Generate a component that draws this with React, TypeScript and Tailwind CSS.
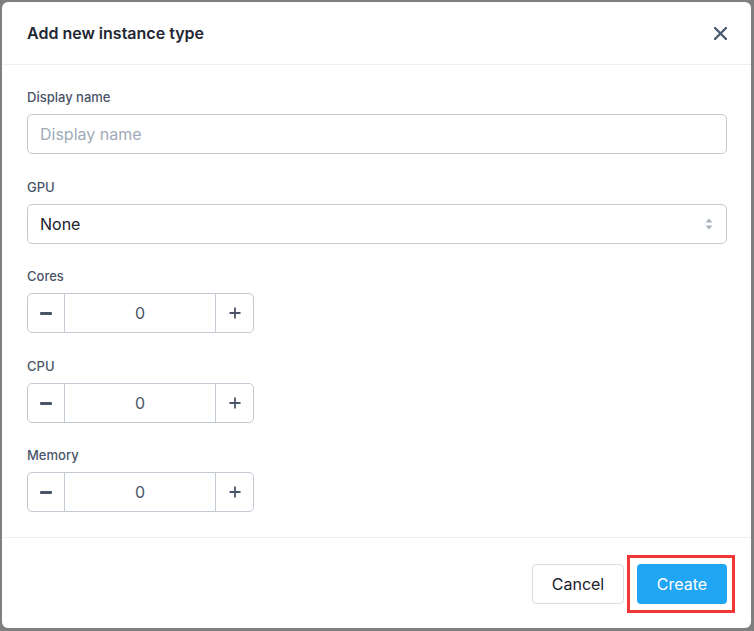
import React from "react";

const font = { fontFamily: "Inter, 'Noto Sans', sans-serif" };

function Label({ children }: { children: React.ReactNode }) {
  return (
    <div className="mb-[7px] text-[13px] leading-[20px] font-medium text-[#4a5568]">
      {children}
    </div>
  );
}

function Stepper() {
  return (
    <div className="flex h-[40px] w-[227px] rounded-[5px] border border-[#c3cad3]">
      <div className="flex w-[37px] items-center justify-center border-r border-[#c3cad3]">
        <div className="h-[3px] w-[12px] rounded-[1px] bg-[#4a5568]" />
      </div>
      <div className="flex flex-1 items-center justify-center text-[16px] text-[#4a5568]">0</div>
      <div className="flex w-[38px] items-center justify-center border-l border-[#c3cad3]">
        <svg width="12" height="12" viewBox="0 0 12 12">
          <path d="M6 0.5V11.5M0.5 6H11.5" stroke="#4a5568" strokeWidth="1.8" />
        </svg>
      </div>
    </div>
  );
}

export default function App() {
  return (
    <div className="h-[631px] w-[754px] bg-[#7f7f7f] pl-[2px] pt-[2px] pr-[3px] pb-[3px]" style={font}>
      <div className="flex h-full w-full flex-col rounded-[6px] bg-white">
        <div className="flex h-[63px] shrink-0 items-center justify-between border-b border-[#edf0f3] pl-[25px] pr-[24px]">
          <div className="text-[16px] font-semibold text-[#1f2733]">Add new instance type</div>
          <svg width="13" height="13" viewBox="0 0 13 13">
            <path d="M1 1L12 12M12 1L1 12" stroke="#4b5c70" strokeWidth="2.4" strokeLinecap="round" />
          </svg>
        </div>
        <div className="flex shrink-0 flex-col border-b border-[#edf0f3] pl-[25px] pr-[24px] pt-[22px] pb-[25px]">
          <Label>Display name</Label>
          <div className="flex h-[40px] items-center rounded-[5px] border border-[#c3cad3] px-[12px] text-[16px] text-[#a0aab7]">
            Display name
          </div>
          <div className="h-[23px]" />
          <Label>GPU</Label>
          <div className="flex h-[40px] items-center justify-between rounded-[5px] border border-[#c3cad3] pl-[12px] pr-[13px] text-[16px] text-[#1a202c]">
            <span>None</span>
            <svg width="8" height="14" viewBox="0 0 8 14">
              <path d="M4 1.5L7.5 5.5H0.5Z" fill="#a8b1bd" />
              <path d="M4 12.5L7.5 8.5H0.5Z" fill="#a8b1bd" />
            </svg>
          </div>
          <div className="h-[22px]" />
          <Label>Cores</Label>
          <Stepper />
          <div className="h-[23px]" />
          <Label>CPU</Label>
          <Stepper />
          <div className="h-[22px]" />
          <Label>Memory</Label>
          <Stepper />
        </div>
        <div className="flex flex-1 items-start justify-end pl-[25px] pr-[24px] pt-[26px]">
          <button className="flex h-[40px] w-[92px] items-center justify-center rounded-[4px] border border-[#d9dde3] bg-white text-[16px] text-[#1a202c]">
            Cancel
          </button>
          <div className="relative ml-[13px]">
            <button className="flex h-[40px] w-[90px] items-center justify-center rounded-[4px] bg-[#21a5f5] text-[16px] text-white">
              Create
            </button>
            <div className="pointer-events-none absolute -top-[9px] -bottom-[9px] -left-[10px] -right-[8px] border-[3px] border-[#f23535]" />
          </div>
        </div>
      </div>
    </div>
  );
}
